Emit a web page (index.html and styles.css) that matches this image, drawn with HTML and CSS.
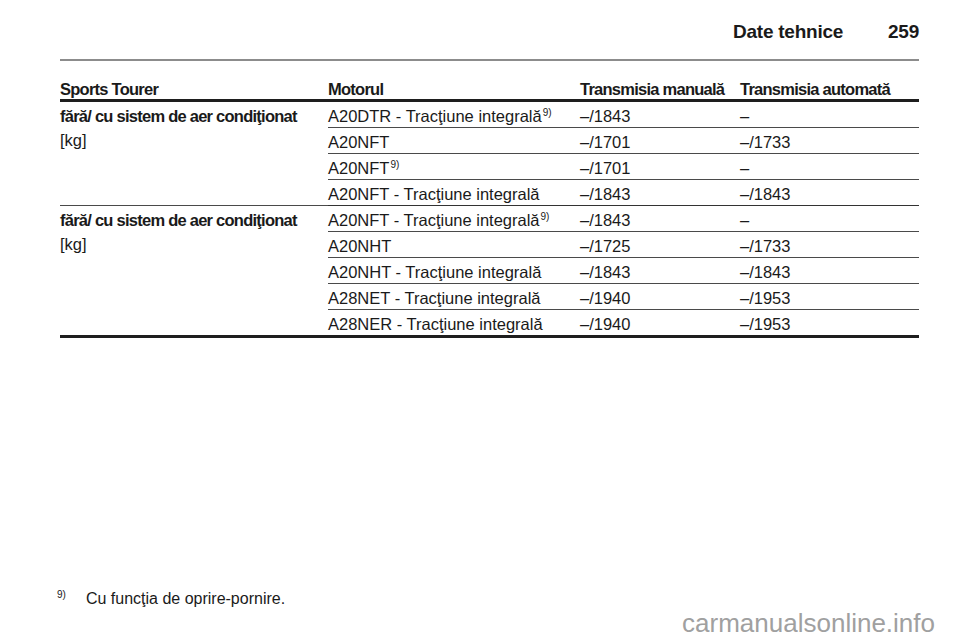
FILE: index.html
```html
<!DOCTYPE html>
<html lang="ro">
<head>
<meta charset="utf-8">
<title>Date tehnice 259</title>
<link rel="stylesheet" href="styles.css">
</head>
<body>
<div class="page">
  <header class="running-head">
    <span class="title">Date tehnice</span>
    <span class="pageno">259</span>
  </header>

  <table class="data">
    <colgroup>
      <col class="c1"><col class="c2"><col class="c3"><col class="c4">
    </colgroup>
    <thead>
      <tr>
        <th>Sports Tourer</th>
        <th>Motorul</th>
        <th>Transmisia manuală</th>
        <th>Transmisia automată</th>
      </tr>
    </thead>
    <tbody>
      <tr>
        <td rowspan="4" class="group"><div class="gtitle">fără/ cu sistem de aer condiţionat</div><div class="unit">[kg]</div></td>
        <td>A20DTR - Tracţiune integrală<sup class="fn">9)</sup></td>
        <td>–/1843</td>
        <td>–</td>
      </tr>
      <tr><td>A20NFT</td><td>–/1701</td><td>–/1733</td></tr>
      <tr><td>A20NFT<sup class="fn">9)</sup></td><td>–/1701</td><td>–</td></tr>
      <tr class="gend"><td>A20NFT - Tracţiune integrală</td><td>–/1843</td><td>–/1843</td></tr>
    </tbody>
    <tbody class="last">
      <tr>
        <td rowspan="5" class="group"><div class="gtitle">fără/ cu sistem de aer condiţionat</div><div class="unit">[kg]</div></td>
        <td>A20NFT - Tracţiune integrală<sup class="fn">9)</sup></td>
        <td>–/1843</td>
        <td>–</td>
      </tr>
      <tr><td>A20NHT</td><td>–/1725</td><td>–/1733</td></tr>
      <tr><td>A20NHT - Tracţiune integrală</td><td>–/1843</td><td>–/1843</td></tr>
      <tr><td>A28NET - Tracţiune integrală</td><td>–/1940</td><td>–/1953</td></tr>
      <tr class="gend"><td>A28NER - Tracţiune integrală</td><td>–/1940</td><td>–/1953</td></tr>
    </tbody>
  </table>

  <footer class="footnote">
    <span class="fnmark">9)</span>
    <span class="fntext">Cu funcţia de oprire-pornire.</span>
  </footer>

  <div class="watermark">carmanualsonline.info</div>
</div>
</body>
</html>
```

FILE: styles.css
```css
* { box-sizing: border-box; }
html, body { margin: 0; padding: 0; background: #fff; }
body {
  font-family: "Liberation Sans", Arial, sans-serif;
  color: #1a1a1a;
}
.page {
  position: relative;
  width: 960px;
  height: 642px;
  padding: 0 41px 34px 60px;
  display: flex;
  flex-direction: column;
  overflow: hidden;
}
.running-head {
  display: flex;
  justify-content: flex-end;
  gap: 45px;
  padding: 21px 0 16px;
  line-height: 22px;
  font-size: 19px;
  font-weight: bold;
  letter-spacing: -0.25px;
  border-bottom: 2px solid #8c8c8c;
}
.data {
  margin-top: 19px;
  width: 859px;
  border-collapse: collapse;
  table-layout: fixed;
  font-size: 16.5px;
  line-height: 19px;
}
.c1 { width: 268px; }
.c2 { width: 252px; }
.c3 { width: 160px; }
.c4 { width: 179px; }
.data th {
  text-align: left;
  font-weight: bold;
  letter-spacing: -0.75px;
  padding: 0;
  border-bottom: 3px solid #1e1e1e;
  white-space: nowrap;
}
.data td {
  text-align: left;
  vertical-align: top;
  padding: 5px 0 1px;
  border-bottom: 1px solid #4a4a4a;
  white-space: nowrap;
}
.gtitle {
  font-weight: bold;
  letter-spacing: -0.75px;
}
.unit { margin-top: 5px; }
.gend td { border-bottom: 1px solid #333; }
.last .gend td, .last td.group { border-bottom: 3px solid #1e1e1e; }
.fn {
  font-size: 10px;
  line-height: 0;
  vertical-align: 6px;
  margin-left: 1px;
}
.footnote {
  margin-top: auto;
  margin-left: -3px;
  display: flex;
  align-items: flex-start;
  gap: 20px;
  font-size: 16px;
  line-height: 19px;
}
.fnmark {
  font-size: 10px;
  line-height: 12px;
}
.watermark {
  position: absolute;
  right: 25px;
  bottom: 4px;
  font-size: 26px;
  line-height: 30px;
  color: #a0a0a0;
}
```
